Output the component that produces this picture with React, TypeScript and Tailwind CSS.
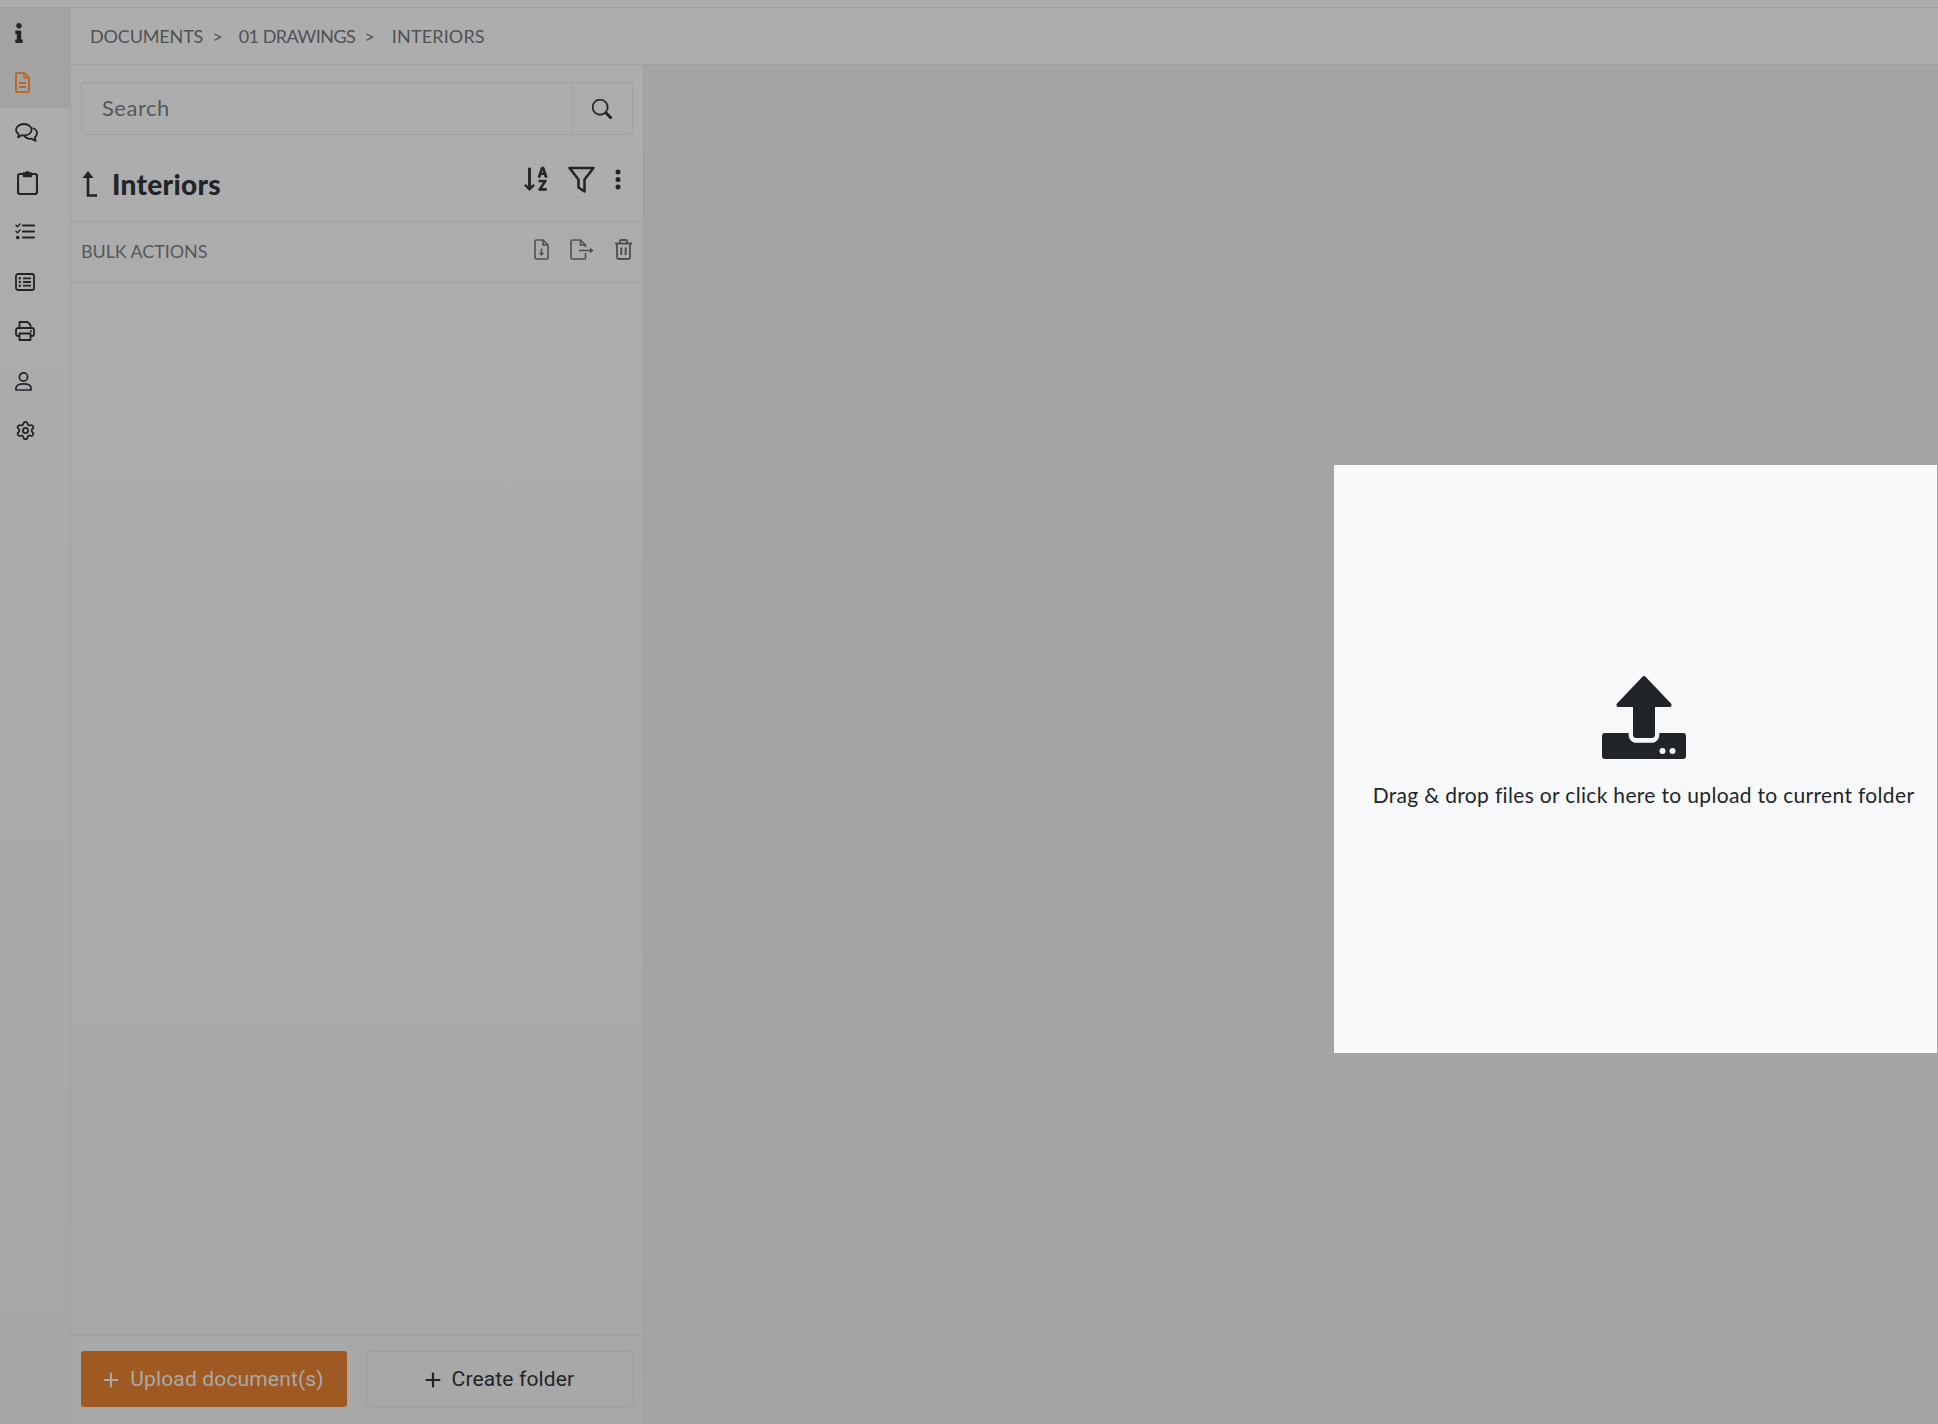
import React from "react";
import { FaInfo } from "react-icons/fa";
import { BsSortAlphaDown, BsSearch } from "react-icons/bs";
import { Settings, Plus } from "lucide-react";

const raleway = "font-['Lato','Liberation_Sans',sans-serif]";
const roboto = "font-['Roboto','Liberation_Sans',sans-serif]";

function DocIcon() {
  return (
    <svg width="15" height="21" viewBox="0 0 15 21" fill="none" stroke="#b56a2a" strokeWidth="2" strokeLinejoin="round">
      <path d="M2.5 1h6.5l5 5v12.500a1.500 1.500 0 0 1-1.500 1.500h-10a1.500 1.500 0 0 1-1.500-1.500v-16a1.500 1.500 0 0 1 1.500-1.500z" />
      <path d="M9 1v5h5" strokeWidth="1.500" />
      <path d="M4 11h7M4 15h7" />
    </svg>
  );
}
function ChatIcon() {
  return (
    <svg width="23" height="19" viewBox="0 0 23 19" fill="none" stroke="#212529" strokeWidth="1.800" strokeLinejoin="round">
      <path d="M9 1c4.400 0 7.600 2.600 7.600 5.800s-3.200 5.700-7.600 5.700c-.8 0-1.600-.1-2.200-.3L3 14.400l.7-3.300C2 10 1 8.500 1 6.800 1 3.600 4.600 1 9 1z" />
      <path d="M17.500 5c2.600.9 4.500 3 4.500 5.300 0 1.600-.8 3-2.200 4l.8 3.600-4-2.200c-3 .4-6-.8-7.300-3.200" />
    </svg>
  );
}
function ClipboardIcon() {
  return (
    <svg width="21" height="25" viewBox="0 0 21 25" fill="none" stroke="#212529" strokeWidth="2.200" strokeLinejoin="round">
      <path d="M6 4H3a2 2 0 0 0-2 2v16a2 2 0 0 0 2 2h15a2 2 0 0 0 2-2V6a2 2 0 0 0-2-2h-3" />
      <path d="M6.500 6.500V3h2.200a1.900 1.900 0 0 1 3.600 0h2.200v3.500z" fill="#212529" strokeWidth="1.400" />
    </svg>
  );
}
function TasksIcon() {
  return (
    <svg width="20" height="17" viewBox="0 0 20 17" fill="none" stroke="#212529" strokeWidth="2.200" strokeLinecap="round">
      <path d="M8 2.500h11M8 8.500h11M8 14.500h11" />
      <path d="M1 2.200l1.500 1.500L5 1M1 8.200l1.500 1.500L5 7" strokeWidth="1.500" />
      <circle cx="2.700" cy="14.500" r="1.800" fill="#212529" stroke="none" />
    </svg>
  );
}
function ListIcon() {
  return (
    <svg width="20" height="18" viewBox="0 0 20 18" fill="none" stroke="#212529" strokeWidth="1.800">
      <rect x="1" y="1" width="18" height="16" rx="2" />
      <path d="M8 5.300h8M8 9h8M8 12.700h8" strokeWidth="1.800" />
      <circle cx="4.800" cy="5.300" r="1.200" fill="#212529" stroke="none" />
      <circle cx="4.800" cy="9" r="1.200" fill="#212529" stroke="none" />
      <circle cx="4.800" cy="12.700" r="1.200" fill="#212529" stroke="none" />
    </svg>
  );
}
function PrintIcon() {
  return (
    <svg width="20" height="20" viewBox="0 0 20 20" fill="none" stroke="#212529" strokeWidth="1.800" strokeLinejoin="round">
      <path d="M4.500 7V1h8l3 3v3" />
      <path d="M4.500 15H3a2 2 0 0 1-2-2V9a2 2 0 0 1 2-2h14a2 2 0 0 1 2 2v4a2 2 0 0 1-2 2h-1.500" />
      <rect x="4.500" y="12.500" width="11" height="6.500" />
      <circle cx="16" cy="10" r="1" fill="#212529" stroke="none" />
    </svg>
  );
}
function PersonIcon() {
  return (
    <svg width="17" height="19" viewBox="0 0 17 19" fill="none" stroke="#212529" strokeWidth="1.700">
      <circle cx="8.500" cy="5" r="4.100" />
      <path d="M1 16c0-2.500 3-4.200 7.500-4.200S16 13.500 16 16v2H1z" strokeLinejoin="round" />
    </svg>
  );
}
function ReturnArrow() {
  return (
    <svg width="15" height="26" viewBox="0 0 15 26" fill="none">
      <path d="M6 0L11.500 7H.5z" fill="#212529" />
      <path d="M6 5v19.500h9" stroke="#212529" strokeWidth="2.600" />
    </svg>
  );
}
function FilterIcon() {
  return (
    <svg width="27" height="27" viewBox="0 0 27 27" fill="none" stroke="#212529" strokeWidth="2.500" strokeLinejoin="round">
      <path d="M1.500 2h24L16.500 13.500V25.500L10.500 21.500V13.500z" />
    </svg>
  );
}
function DotsIcon() {
  return (
    <svg width="6" height="21" viewBox="0 0 6 21" fill="#212529">
      <circle cx="3" cy="3" r="2.500" />
      <circle cx="3" cy="10.500" r="2.500" />
      <circle cx="3" cy="18" r="2.500" />
    </svg>
  );
}
function BulkDoc() {
  return (
    <svg width="15" height="21" viewBox="0 0 15 21" fill="none" stroke="#4d5052" strokeWidth="1.600" strokeLinejoin="round">
      <path d="M2.500 1h6.500l5 5v12.500a1.500 1.500 0 0 1-1.500 1.500h-10a1.500 1.500 0 0 1-1.500-1.500v-16a1.500 1.500 0 0 1 1.500-1.500z" />
      <path d="M9 1v5h5" />
      <path d="M7.500 9.500v6.500" />
      <path d="M4.800 13.700L7.500 17l2.700-3.300z" fill="#4d5052" stroke="none" />
    </svg>
  );
}
function BulkExport() {
  return (
    <svg width="24" height="21" viewBox="0 0 24 21" fill="none" stroke="#4d5052" strokeWidth="1.600" strokeLinejoin="round">
      <path d="M15.500 14v4.500a1.500 1.500 0 0 1-1.500 1.500H2.500a1.500 1.500 0 0 1-1.500-1.500v-16a1.500 1.500 0 0 1 1.500-1.500h8l5 5v2" />
      <path d="M10.500 1v5h5" />
      <path d="M9 11.500h12" />
      <path d="M20 8.500l3.500 3-3.500 3z" fill="#4d5052" stroke="none" />
    </svg>
  );
}
function BulkTrash() {
  return (
    <svg width="19" height="21" viewBox="0 0 19 21" fill="none" stroke="#4d5052" strokeWidth="1.800" strokeLinejoin="round">
      <path d="M1 4.500h17M6 4.500V2a1 1 0 0 1 1-1h5a1 1 0 0 1 1 1v2.500" />
      <path d="M3 4.500V18a2 2 0 0 0 2 2h9a2 2 0 0 0 2-2V4.500" />
      <path d="M7.300 8.500v7.500M11.700 8.500v7.500" strokeWidth="2" />
    </svg>
  );
}
function UploadGlyph() {
  return (
    <svg width="84" height="84" viewBox="0 0 84 84" fill="#212529">
      <path d="M40.500.8a2 2 0 0 1 3 0l25.500 26.700c1.200 1.300.4 3.500-1.400 3.500H53v27.500a3.500 3.500 0 0 1-3.500 3.500h-15a3.500 3.500 0 0 1-3.500-3.500V31H16.400c-1.800 0-2.600-2.200-1.400-3.500z" />
      <path fillRule="evenodd" d="M3 57h23.700v1.500c0 5 3.300 8.300 8 8.300h14.600c4.700 0 8-3.300 8-8.300V57H81a3 3 0 0 1 3 3v20a3 3 0 0 1-3 3H3a3 3 0 0 1-3-3V60a3 3 0 0 1 3-3z" />
      <circle cx="60.500" cy="75" r="3" fill="#f8f9fa" />
      <circle cx="70.500" cy="75" r="3" fill="#f8f9fa" />
    </svg>
  );
}

function Rail({ children, active }: { children: React.ReactNode; active?: boolean }) {
  return <div className={`flex h-[49.75px] items-center pl-[15px] ${active ? "bg-[#a3a3a3]" : ""}`}>{children}</div>;
}

export default function App() {
  return (
    <div className={`relative flex h-[1424px] w-[1938px] flex-col overflow-hidden bg-[#a4a4a4] ${raleway}`}>
      <div className="h-[8px] shrink-0 border-b border-[#9f9f9f] bg-[#adadad]" />
      <div className="flex min-h-0 flex-1">
        <aside className="flex w-[71px] shrink-0 flex-col border-r border-[#a0a0a0] bg-gradient-to-b from-[#adadad] to-[#a7a7a7]">
          <Rail active><FaInfo className="h-[20px] w-[8px] text-[#212529]" /></Rail>
          <Rail active><DocIcon /></Rail>
          <Rail><ChatIcon /></Rail>
          <Rail><span className="pl-[2px]"><ClipboardIcon /></span></Rail>
          <Rail><TasksIcon /></Rail>
          <Rail><ListIcon /></Rail>
          <Rail><PrintIcon /></Rail>
          <Rail><PersonIcon /></Rail>
          <Rail><Settings size={21} strokeWidth={2} color="#212529" /></Rail>
        </aside>
        <div className="flex min-w-0 flex-1 flex-col">
          <header className="flex h-[57px] shrink-0 items-center border-b border-[#a0a0a0] bg-[#adadad] pl-[19px] text-[18px] text-[#4f5255]">
            <span className="tracking-[-0.15px]">DOCUMENTS</span>
            <span className="ml-[9px]">&gt;</span>
            <span className="ml-[16px] tracking-[-0.5px]">01 DRAWINGS</span>
            <span className="ml-[9px]">&gt;</span>
            <span className="ml-[17px] tracking-[0.15px]">INTERIORS</span>
          </header>
          <div className="flex min-h-0 flex-1">
            <section className="flex w-[573px] shrink-0 flex-col border-r border-[#9f9f9f] bg-gradient-to-b from-[#adadad] to-[#a8a8a8]">
              <div className="shrink-0 pl-[10px] pr-[10px] pt-[17px]">
                <div className="flex h-[53px] w-[552px] items-center rounded-[3px] border border-[#a0a0a0]">
                  <span className="flex-1 pb-[2px] pl-[20px] text-[22px] tracking-[0.5px] text-[#55585b]">Search</span>
                  <span className="flex h-full w-[60px] items-center justify-center border-l border-[#a0a0a0] pr-[2px] text-[#212529]"><BsSearch size={20} strokeWidth={0.4} /></span>
                </div>
              </div>
              <div className="flex h-[88px] shrink-0 items-start border-b border-[#a0a0a0] pl-[11px] pr-[22px]">
                <span className="mt-[35px] flex items-center">
                  <ReturnArrow />
                  <span className="ml-[15px] text-[28px] font-black leading-[28px] tracking-[0.3px] text-[#212529]">Interiors</span>
                </span>
                <span className="ml-auto mt-[29px] flex items-center">
                  <BsSortAlphaDown size={30} color="#212529" strokeWidth={0.5} />
                  <span className="ml-[16px]"><FilterIcon /></span>
                  <span className="ml-[20px]"><DotsIcon /></span>
                </span>
              </div>
              <div className="flex h-[59px] shrink-0 items-center border-b border-[#a0a0a0] pl-[10px] pr-[10px]">
                <span className="pb-[1px] text-[18px] tracking-[-0.1px] text-[#55585b]">BULK ACTIONS</span>
                <span className="mb-[5px] ml-auto flex items-center">
                  <BulkDoc />
                  <span className="ml-[21px]"><BulkExport /></span>
                  <span className="ml-[20px]"><BulkTrash /></span>
                </span>
              </div>
              <div className="flex-1" />
              <div className={`flex h-[90px] shrink-0 items-start border-t border-[#a0a0a0] pl-[10px] pt-[16px] text-[21px] tracking-[0.15px] ${roboto}`}>
                <button className="flex h-[56px] w-[266px] items-center justify-center gap-[8px] rounded-[3px] bg-[#9f5a24] pr-[4px] pt-[2px] text-[#a9a9a9]">
                  <Plus size={22} strokeWidth={2.2} />Upload document(s)
                </button>
                <button className="ml-[20px] flex h-[56px] w-[266px] items-center justify-center gap-[8px] rounded-[3px] border border-[#a0a0a0] pr-[4px] pt-[2px] text-[#212529]">
                  <Plus size={22} strokeWidth={2.4} />Create folder
                </button>
              </div>
            </section>
            <main className="min-w-0 flex-1" />
          </div>
        </div>
      </div>
      <div className="absolute left-[1334px] top-[465px] flex h-[588px] w-[603px] flex-col items-center bg-[#f8f9fa] pl-[16px] pt-[211px] text-[#212529]">
        <UploadGlyph />
        <p className="mt-[21px] whitespace-nowrap text-[21px] leading-[28px] tracking-[0.33px] text-[#212529]">Drag &amp; drop files or click here to upload to current folder</p>
      </div>
    </div>
  );
}
